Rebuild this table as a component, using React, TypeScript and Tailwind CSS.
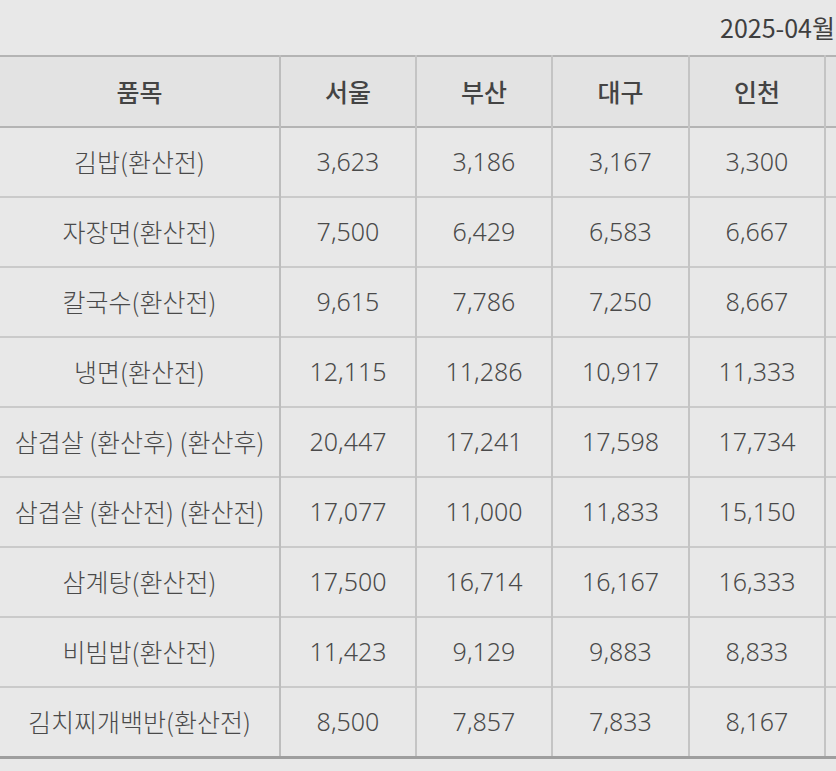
import React from "react"

const rows: [string, string, string, string, string][] = [
  ["김밥(환산전)", "3,623", "3,186", "3,167", "3,300"],
  ["자장면(환산전)", "7,500", "6,429", "6,583", "6,667"],
  ["칼국수(환산전)", "9,615", "7,786", "7,250", "8,667"],
  ["냉면(환산전)", "12,115", "11,286", "10,917", "11,333"],
  ["삼겹살 (환산후) (환산후)", "20,447", "17,241", "17,598", "17,734"],
  ["삼겹살 (환산전) (환산전)", "17,077", "11,000", "11,833", "15,150"],
  ["삼계탕(환산전)", "17,500", "16,714", "16,167", "16,333"],
  ["비빔밥(환산전)", "11,423", "9,129", "9,883", "8,833"],
  ["김치찌개백반(환산전)", "8,500", "7,857", "7,833", "8,167"],
]

const cities = ["서울", "부산", "대구", "인천"]

export default function App() {
  return (
    <div
      className="w-[836px] h-[771px] overflow-hidden bg-[#e8e8e8] text-[#4a4a4a]"
      style={{ fontFamily: '"Noto Sans CJK KR", "Noto Sans", sans-serif' }}
    >
      <div className="w-[1100px]">
        {/* date line, cut by the window edge */}
        <div className="h-[55px] flex items-center pl-[720px] text-[25px] whitespace-nowrap text-[#3f3f3f]">
          2025-04월
        </div>

        <table className="border-collapse table-fixed w-[1100px]">
          <colgroup>
            <col className="w-[280px]" />
            <col className="w-[136px]" />
            <col className="w-[136px]" />
            <col className="w-[137px]" />
            <col className="w-[136px]" />
            <col className="w-[275px]" />
          </colgroup>
          <thead>
            <tr className="h-[71px] bg-[#e3e3e3] border-t-2 border-b-2 border-t-[#b4b4b4] border-b-[#b4b4b4]">
              <th className="text-[25px] font-medium text-[#444] border-r-2 border-[#bdbdbd]">품목</th>
              {cities.map((c) => (
                <th key={c} className="text-[25px] font-medium text-[#444] border-r-2 border-[#c4c4c4]">
                  {c}
                </th>
              ))}
              <th className="border-r-2 border-[#c4c4c4]"></th>
            </tr>
          </thead>
          <tbody>
            {rows.map((r, i) => (
              <tr
                key={i}
                className={`h-[70px] ${i === rows.length - 1 ? "border-b-[3px] border-b-[#9e9e9e]" : "border-b-2 border-b-[#cacaca]"}`}
              >
                {r.map((v, j) =>
                  j === 0 ? (
                    <td key={j} className="text-center text-[25px] font-light whitespace-nowrap border-r-2 border-[#bdbdbd]">
                      {v}
                    </td>
                  ) : (
                    <td
                      key={j}
                      className="text-center text-[25px] font-light whitespace-nowrap border-r-2 border-[#c4c4c4] font-['Noto_Sans',sans-serif]"
                    >
                      {v}
                    </td>
                  )
                )}
                <td className="border-r-2 border-[#c4c4c4]"></td>
              </tr>
            ))}
          </tbody>
        </table>
      </div>
    </div>
  )
}
